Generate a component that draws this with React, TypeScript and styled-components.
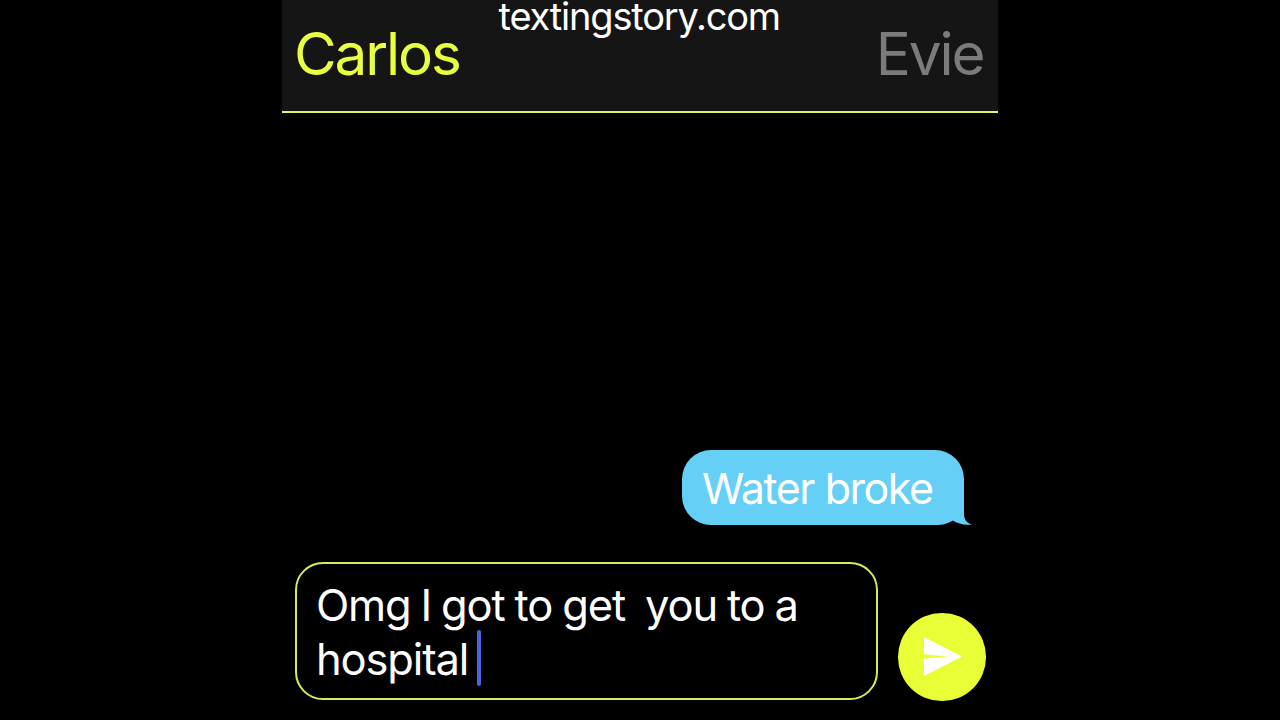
import React from "react";
import styled, { createGlobalStyle } from "styled-components";

const App: React.FC = () => {
  return (
    <>
      <GlobalStyle />
      <Screen>
        <Phone>
          <Header>
            <Name $active>Carlos</Name>
            <Watermark>textingstory.com</Watermark>
            <Name>Evie</Name>
          </Header>

          <Messages>
            <Bubble>
              Water broke
              <Tail viewBox="0 0 34 34" aria-hidden="true">
                <path d="M26 0V23C26 29 29.500 32.500 34 33.500C27 34.600 20 33 14.500 29.300L8 10Z" />
              </Tail>
            </Bubble>
          </Messages>

          <Composer>
            <Input>
              <Line>Omg I got to get{"  "}you to a</Line>
              <Line>
                hospital
                <Caret />
              </Line>
            </Input>
            <SendButton aria-label="Send">
              <svg width="38" height="39" viewBox="0 0 38 39">
                <path d="M0 0L38 19.500L0 39V21.800L24 19.500L0 17.200Z" />
              </svg>
            </SendButton>
          </Composer>
        </Phone>
      </Screen>
    </>
  );
};

// --- Styles ---

const GlobalStyle = createGlobalStyle`
  * {
    box-sizing: border-box;
  }

  body {
    margin: 0;
    background: #000;
    font-family: Inter, "Liberation Sans", sans-serif;
    overflow: hidden;
  }
`;

const Screen = styled.div`
  display: flex;
  justify-content: center;
  width: 100%;
  height: 720px;
  background: #000;
`;

const Phone = styled.main`
  display: flex;
  flex-direction: column;
  width: 716px;
  height: 100%;
`;

const Header = styled.header`
  display: grid;
  grid-template-columns: 1fr auto 1fr;
  height: 113px;
  padding: 0 14.5px 0 12px;
  background: #151515;
  border-bottom: 2px solid #e0f25c;
`;

const Name = styled.div<{ $active?: boolean }>`
  color: ${({ $active }) => ($active ? "#e9ff40" : "#7b7b7b")};
  font-size: 58.5px;
  line-height: 108px;
  letter-spacing: -2.15px;

  &:last-child {
    text-align: right;
  }
`;

const Watermark = styled.div`
  color: white;
  font-size: 38px;
  line-height: 33px;
  letter-spacing: -1.2px;
  margin-left: 1px;
`;

const Messages = styled.section`
  flex: 1;
  display: flex;
  flex-direction: column;
  justify-content: flex-end;
  align-items: flex-end;
  padding: 0 34px 37px 0;
`;

const Bubble = styled.div`
  position: relative;
  width: 282px;
  height: 75px;
  padding-left: 20px;
  background: #65cff5;
  border-radius: 29px 29px 26px 29px;
  color: white;
  font-size: 43px;
  line-height: 77px;
  letter-spacing: -1.45px;
  white-space: nowrap;
`;

const Tail = styled.svg`
  position: absolute;
  right: -8px;
  bottom: 0;
  width: 34px;
  height: 34px;
  fill: #65cff5;
`;

const Composer = styled.footer`
  display: flex;
  align-items: flex-end;
  justify-content: space-between;
  height: 158px;
  padding: 0 12.5px 20px 13px;
`;

const Input = styled.div`
  width: 583px;
  height: 138px;
  padding: 14px 19px 0;
  border: 2px solid #d9ea58;
  border-radius: 28px;
  color: white;
  font-size: 43.5px;
`;

const Line = styled.div`
  display: flex;
  height: 54px;
  line-height: 54px;
  letter-spacing: -1.15px;
  word-spacing: -1.1px;
  white-space: pre;
`;

const Caret = styled.span`
  width: 4px;
  height: 56px;
  margin: -2px 0 0 9px;
  border-radius: 2px;
  background: #4966e0;
`;

const SendButton = styled.button`
  display: flex;
  align-items: center;
  justify-content: center;
  width: 87.5px;
  height: 87.5px;
  margin-bottom: -0.5px;
  padding: 0 0 0 3px;
  border: 0;
  border-radius: 50%;
  background: #e9ff35;

  svg {
    fill: white;
  }
`;

export default App;
